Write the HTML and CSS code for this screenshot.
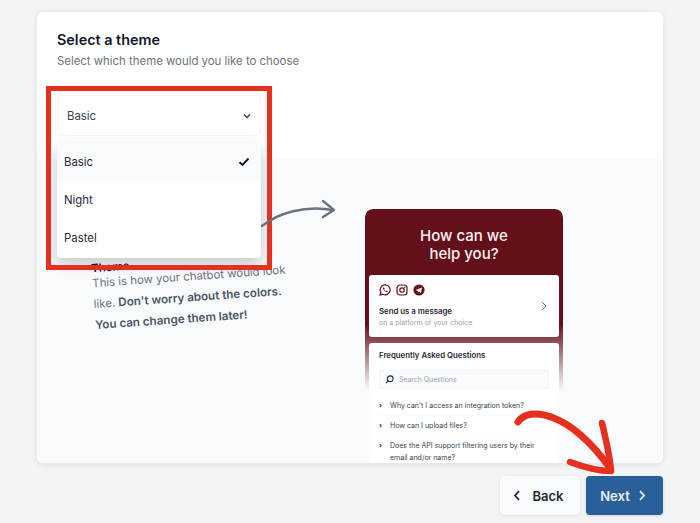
FILE: index.html
```html
<!DOCTYPE html>
<html lang="en">
<head>
<meta charset="utf-8">
<title>Select a theme</title>
<link rel="stylesheet" href="styles.css">
</head>
<body>
<main class="page">
  <section class="card">
    <header class="card-head">
      <h1 class="title">Select a theme</h1>
      <p class="subtitle">Select which theme would you like to choose</p>
      <div class="select">
        <span>Basic</span>
        <svg class="select-chev" width="10" height="10" viewBox="0 0 10 10"><path d="M2 3.5 5 6.5 8 3.5" fill="none" stroke="#374151" stroke-width="1.5"/></svg>
      </div>
    </header>
    <div class="preview">
      <div class="note">
        <div class="note-title">Theme</div>
        <p class="note-text">This is how your chatbot would look<br>like. <b>Don't worry about the colors.<br>You can change them later!</b></p>
      </div>
      <div class="phone">
        <div class="phone-bg"></div>
        <h2 class="phone-title">How can we<br>help you?</h2>
        <div class="msg-card">
          <div class="msg-body">
            <div class="msg-icons">
              <svg width="12" height="12" viewBox="0 0 12 12"><path d="M1 11 1.8 8.3A5 5 0 1 1 3.7 10.2Z" fill="none" stroke="#64101a" stroke-width="1.2"/><path d="M4 3.6C3.6 5.6 6 8.4 8.4 8 8.8 7.2 8.4 6.8 7.4 6.6L6.8 7.1C6 6.8 5.4 6.1 5.2 5.4L5.6 4.7C5.4 3.8 4.8 3.4 4 3.6Z" fill="#64101a"/></svg>
              <svg width="12" height="12" viewBox="0 0 12 12"><rect x="1" y="1" width="10" height="10" rx="3" fill="none" stroke="#64101a" stroke-width="1.2"/><circle cx="6" cy="6" r="2.2" fill="none" stroke="#64101a" stroke-width="1.2"/><circle cx="8.8" cy="3.2" r=".7" fill="#64101a"/></svg>
              <svg width="12" height="12" viewBox="0 0 12 12"><circle cx="6" cy="6" r="5.6" fill="#64101a"/><path d="M2.6 6 9 3.4 8 9 6 7.6 5 8.6 4.8 6.9Z" fill="#fff"/></svg>
            </div>
            <div class="msg-title">Send us a message</div>
            <div class="msg-sub">on a platform of your choice</div>
          </div>
          <svg class="msg-chev" width="6" height="10" viewBox="0 0 6 10"><path d="M1 1 5 5 1 9" fill="none" stroke="#6b7280" stroke-width="1"/></svg>
        </div>
        <div class="faq-card">
          <div class="faq-title">Frequently Asked Questions</div>
          <div class="search">
            <svg width="9" height="9" viewBox="0 0 10 10"><circle cx="5.8" cy="4.2" r="3.2" fill="none" stroke="#1f2937" stroke-width="1.2"/><path d="M3.4 6.6 1 9" stroke="#1f2937" stroke-width="1.2"/></svg>
            <span>Search Questions</span>
          </div>
          <ul class="faq-list">
            <li class="faq-item"><span class="faq-arrow">›</span><span>Why can't I access an integration token?</span></li>
            <li class="faq-item"><span class="faq-arrow">›</span><span>How can I upload files?</span></li>
            <li class="faq-item"><span class="faq-arrow">›</span><span>Does the API support filtering users by their email and/or name?</span></li>
          </ul>
        </div>
      </div>
    </div>
    <div class="menu">
      <div class="menu-item menu-item-active">
        <span>Basic</span>
        <svg width="12" height="10" viewBox="0 0 12 10"><path d="M1.5 5.2 4.5 8 10.5 1.5" fill="none" stroke="#111827" stroke-width="1.9"/></svg>
      </div>
      <div class="menu-item">Night</div>
      <div class="menu-item">Pastel</div>
    </div>
  </section>
  <footer class="actions">
    <button class="btn btn-back"><svg width="8" height="11" viewBox="0 0 8 11"><path d="M6 1.2 2 5.5 6 9.8" fill="none" stroke="#1f2937" stroke-width="1.8"/></svg>Back</button>
    <button class="btn btn-next">Next<svg width="8" height="11" viewBox="0 0 8 11"><path d="M2 1.2 6 5.5 2 9.8" fill="none" stroke="#e5edf5" stroke-width="1.8"/></svg></button>
  </footer>
  <div class="highlight"></div>
  <svg class="doodle" width="700" height="523" viewBox="0 0 700 523">
    <path d="M262 226C278 213 305 205 333 210" fill="none" stroke="#6b7280" stroke-width="2.4" stroke-linecap="round"/>
    <path d="M323 201 334 210 323 217" fill="none" stroke="#6b7280" stroke-width="2.4" stroke-linecap="round" stroke-linejoin="round"/>
    <path d="M518 422C528 406 568 410 610 468" fill="none" stroke="#e5301f" stroke-width="7" stroke-linecap="round"/>
    <path d="M602 423C606 440 610 456 611 471 600 471 586 468 570 462" fill="none" stroke="#e5301f" stroke-width="6.5" stroke-linecap="round" stroke-linejoin="round"/>
  </svg>
</main>
</body>
</html>
```
FILE: styles.css
```css
* { box-sizing: border-box; }
html, body { margin: 0; height: 100%; }
body {
  background: #f3f4f6;
  font-family: Inter, "Liberation Sans", sans-serif;
  color: #111827;
  overflow: hidden;
}
.page {
  position: relative;
  width: 700px;
  height: 523px;
  padding: 12px 37px 0;
  display: flex;
  flex-direction: column;
}
.card {
  position: relative;
  height: 451px;
  border-radius: 6px;
  background: #fff;
  box-shadow: 0 1px 6px rgba(17, 24, 39, .1);
  display: flex;
  flex-direction: column;
  overflow: hidden;
}
.card-head {
  height: 147px;
  padding: 19px 20px 0;
}
.title {
  margin: 0;
  font-size: 14.4px;
  line-height: 18px;
  font-weight: 600;
}
.subtitle {
  margin: 4px 0 0;
  font-size: 11.4px;
  line-height: 16px;
  color: #6b7280;
}
.select {
  margin-top: 26px;
  width: 204px;
  height: 41px;
  padding: 0 8px 0 9px;
  border: 1px solid #f3f4f6;
  border-radius: 4px;
  display: flex;
  align-items: center;
  justify-content: space-between;
  font-size: 11.4px;
  color: #374151;
}
.preview {
  position: relative;
  flex: 1;
  min-height: 0;
  background: #f9fafb;
  overflow: hidden;
}
.note {
  position: absolute;
  left: 56px;
  top: 92px;
  width: 204px;
  transform: rotate(-4deg);
  font-size: 11.4px;
  line-height: 21px;
  color: #6b7280;
}
.note-title {
  height: 15px;
  font-weight: 600;
  color: #111827;
}
.note-text { margin: 0; }
.note-text b { font-size: 11.6px; font-weight: 600; color: #4b5563; }
.phone {
  position: absolute;
  left: 328px;
  top: 50px;
  width: 198px;
  height: 254px;
  padding: 18px 4px 0;
  border-radius: 8px 8px 0 0;
  overflow: hidden;
  display: flex;
  flex-direction: column;
}
.phone-bg {
  position: absolute;
  inset: 0;
  height: 181px;
  border-radius: 8px 8px 0 0;
  background: linear-gradient(#64101a 0, #64101a 115px, rgba(100, 16, 26, 0) 181px);
}
.phone-title {
  position: relative;
  margin: 0;
  height: 48px;
  flex-shrink: 0;
  text-align: center;
  font-size: 15px;
  line-height: 18px;
  font-weight: 500;
  color: #fdf2f2;
}
.msg-card {
  position: relative;
  flex-shrink: 0;
  height: 62px;
  padding: 0 12px 0 10px;
  border-radius: 3px;
  background: #fff;
  display: flex;
  align-items: center;
  justify-content: space-between;
}
.msg-icons {
  display: flex;
  gap: 5px;
  margin-bottom: 10px;
}
.msg-title {
  font-size: 7.8px;
  line-height: 11px;
  font-weight: 600;
  color: #1f2937;
}
.msg-sub {
  font-size: 7px;
  line-height: 11px;
  color: #9ca3af;
}
.faq-card {
  position: relative;
  margin-top: 6px;
  flex: 1;
  padding: 7px 10px 0;
  border-radius: 3px 3px 0 0;
  background: #fff;
}
.faq-title {
  font-size: 7.8px;
  line-height: 11px;
  font-weight: 600;
  color: #1f2937;
}
.search {
  margin-top: 9px;
  height: 19px;
  padding: 0 5px;
  background: #f9fafb;
  border: 1px solid #f3f4f6;
  display: flex;
  align-items: center;
  gap: 5px;
  font-size: 6.9px;
  color: #9ca3af;
}
.faq-list {
  margin: 7px 0 0;
  padding: 0;
  list-style: none;
}
.faq-item {
  display: flex;
  gap: 8px;
  padding: 4px 0 3px;
  border-bottom: 1px solid #f9fafb;
  font-size: 7px;
  line-height: 12px;
  color: #374151;
}
.faq-arrow { font-weight: 700; color: #111827; }
.menu {
  position: absolute;
  left: 20px;
  top: 131px;
  width: 204px;
  height: 115px;
  border-radius: 4px;
  background: #fff;
  box-shadow: 0 6px 14px rgba(17, 24, 39, .22);
  overflow: hidden;
}
.menu-item {
  height: 38px;
  padding: 0 11px 0 7px;
  display: flex;
  align-items: center;
  justify-content: space-between;
  font-size: 11.4px;
  color: #1f2937;
}
.menu-item-active { background: #f9fafb; }
.actions {
  margin-top: 13px;
  display: flex;
  justify-content: flex-end;
  gap: 6px;
}
.btn {
  height: 39px;
  border: 0;
  border-radius: 4px;
  display: flex;
  align-items: center;
  justify-content: center;
  font: 600 13px Inter, "Liberation Sans", sans-serif;
}
.btn-back {
  width: 80px;
  padding-left: 3px;
  gap: 11px;
  background: #f9fafb;
  color: #1f2937;
  box-shadow: 0 1px 3px rgba(17, 24, 39, .1);
}
.btn-next {
  width: 77px;
  padding-right: 9px;
  gap: 8px;
  background: #2a6099;
  color: #e5edf5;
  box-shadow: 0 1px 3px rgba(17, 24, 39, .15);
}
.highlight {
  position: absolute;
  left: 46px;
  top: 86px;
  width: 226px;
  height: 184px;
  border: 5px solid #e5301f;
}
.doodle {
  position: absolute;
  left: 0;
  top: 0;
  pointer-events: none;
}
```
